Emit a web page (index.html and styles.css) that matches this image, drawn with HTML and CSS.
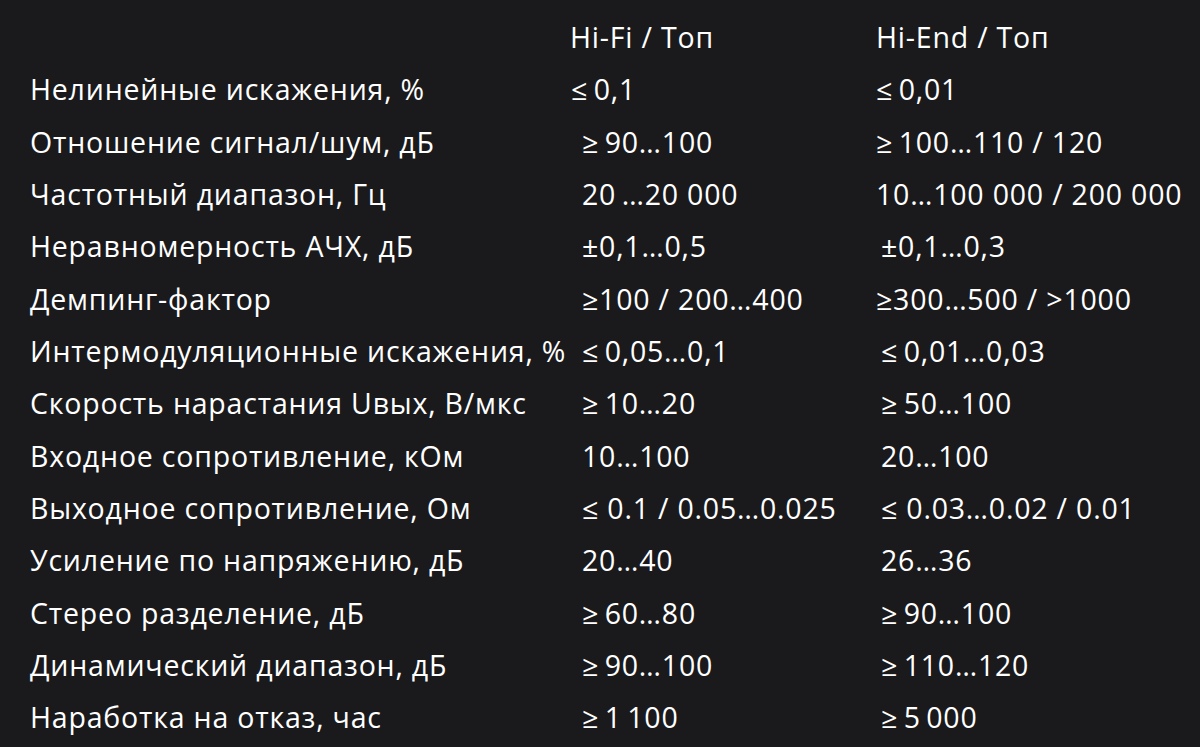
FILE: index.html
```html
<!DOCTYPE html>
<html lang="ru">
<head>
<meta charset="utf-8">
<title>Характеристики усилителей</title>
<link rel="stylesheet" href="styles.css">
</head>
<body>
<div class="specs">
  <div class="cell"></div>
  <div class="cell">Hi-Fi / Топ</div>
  <div class="cell">Hi-End / Топ</div>

  <div class="cell">Нелинейные искажения, %</div>
  <div class="cell s1">≤&#8201;0,1</div>
  <div class="cell">≤&#8201;0,01</div>

  <div class="cell">Отношение сигнал/шум, дБ</div>
  <div class="cell s2">≥&#8201;90…100</div>
  <div class="cell">≥&#8201;100…110 / 120</div>

  <div class="cell">Частотный диапазон, Гц</div>
  <div class="cell s2">20&#8201;…20 000</div>
  <div class="cell">10…100 000 / 200 000</div>

  <div class="cell">Неравномерность АЧХ, дБ</div>
  <div class="cell s2">±0,1…0,5</div>
  <div class="cell s3">±0,1…0,3</div>

  <div class="cell">Демпинг-фактор</div>
  <div class="cell s2">≥100 / 200…400</div>
  <div class="cell">≥300…500 / &gt;1000</div>

  <div class="cell">Интермодуляционные искажения, %</div>
  <div class="cell s2">≤&#8201;0,05…0,1</div>
  <div class="cell s3">≤&#8201;0,01…0,03</div>

  <div class="cell">Скорость нарастания Uвых, В/мкс</div>
  <div class="cell s2">≥&#8201;10…20</div>
  <div class="cell s3">≥&#8201;50…100</div>

  <div class="cell">Входное сопротивление, кОм</div>
  <div class="cell s2">10…100</div>
  <div class="cell s3">20…100</div>

  <div class="cell">Выходное сопротивление, Ом</div>
  <div class="cell s2">≤ 0.1 / 0.05…0.025</div>
  <div class="cell s3">≤ 0.03…0.02 / 0.01</div>

  <div class="cell">Усиление по напряжению, дБ</div>
  <div class="cell s2">20…40</div>
  <div class="cell s3">26…36</div>

  <div class="cell">Стерео разделение, дБ</div>
  <div class="cell s2">≥&#8201;60…80</div>
  <div class="cell s3">≥&#8201;90…100</div>

  <div class="cell">Динамический диапазон, дБ</div>
  <div class="cell s2">≥&#8201;90…100</div>
  <div class="cell s3">≥&#8201;110…120</div>

  <div class="cell">Наработка на отказ, час</div>
  <div class="cell s2">≥&#8201;1&#8201;100</div>
  <div class="cell s3">≥&#8201;5&#8201;000</div>
</div>
</body>
</html>
```
FILE: styles.css
```css
html, body {
  margin: 0;
  padding: 0;
  background: #1a1a1c;
}

body {
  width: 1200px;
  height: 747px;
  overflow: hidden;
  color: #ffffff;
  font-family: "Open Sans", "Noto Sans", sans-serif;
  font-size: 28.5px;
  letter-spacing: 0.8px;
}

.specs {
  display: grid;
  grid-template-columns: 540px 306px auto;
  grid-auto-rows: 52.33px;
  padding: 11px 0 0 30px;
}

.cell {
  line-height: 52.33px;
  white-space: nowrap;
}

.s1 {
  padding-left: 1px;
}

.s2 {
  padding-left: 12px;
}

.s3 {
  padding-left: 5px;
}
```
